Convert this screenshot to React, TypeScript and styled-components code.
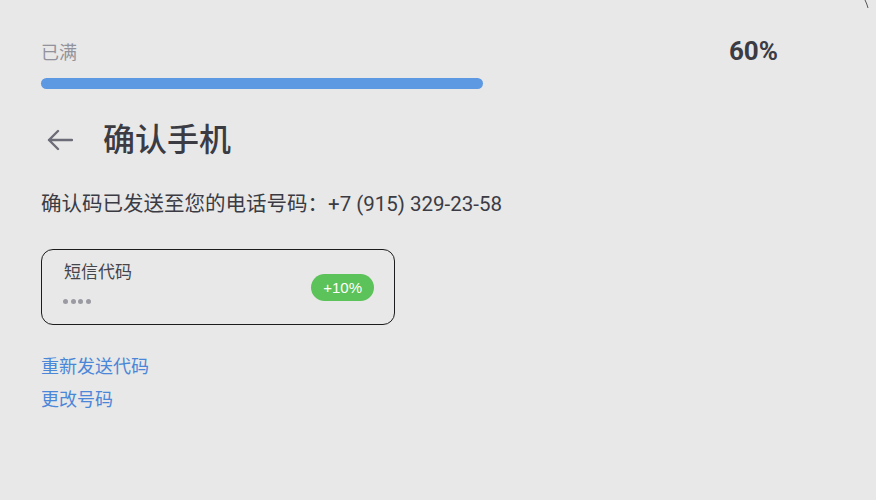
import React from "react";
import styled, { createGlobalStyle } from "styled-components";

const GlobalStyle = createGlobalStyle`
  html, body {
    margin: 0;
    padding: 0;
    background: #e8e8e8;
  }
  body {
    font-family: "Noto Sans", "Noto Sans CJK SC", sans-serif;
  }
`;

const Page = styled.div`
  position: relative;
  width: 876px;
  height: 500px;
  box-sizing: border-box;
  padding: 37px 0 0 41px;
  background: #e8e8e8;
  overflow: hidden;
`;

const ProgressBlock = styled.div`
  width: 737px;
  display: flex;
  flex-direction: column;
`;

const ProgressHead = styled.div`
  display: flex;
  justify-content: space-between;
  align-items: center;
  height: 28px;
`;

const Muted = styled.span`
  font-size: 18px;
  color: #92929c;
  font-family: "Noto Sans CJK SC", sans-serif;
`;

const Percent = styled.span`
  font-family: "Roboto", "Liberation Sans", sans-serif;
  font-size: 26px;
  font-weight: 700;
  color: #3b3b44;
`;

const Track = styled.div`
  margin-top: 13px;
  height: 11px;
  border-radius: 6px;
`;

const Fill = styled.div`
  height: 100%;
  border-radius: 6px;
  background: #5d98e2;
`;

const TitleRow = styled.div`
  display: flex;
  align-items: center;
  gap: 30px;
  margin-top: 26px;
  height: 44px;
`;

const BackButton = styled.button`
  border: none;
  background: none;
  padding: 0 0 0 6px;
  margin-top: 6px;
  display: flex;
  align-items: center;
  cursor: pointer;
`;

const Title = styled.h1`
  margin: 0;
  font-family: "Noto Sans CJK SC", sans-serif;
  font-size: 32px;
  font-weight: 500;
  color: #3b3b44;
`;

const Subtitle = styled.p`
  margin: 33px 0 0;
  font-size: 20.5px;
  color: #3b3b44;
  font-family: "Roboto", "Noto Sans CJK SC", sans-serif;
  line-height: 24px;
`;

const Field = styled.div`
  margin-top: 33px;
  width: 354px;
  height: 76px;
  box-sizing: border-box;
  border: 1.5px solid #1c1c1e;
  border-radius: 12px;
  padding: 10px 20px 0 22px;
  display: flex;
  justify-content: space-between;
  align-items: center;
`;

const FieldText = styled.div`
  display: flex;
  flex-direction: column;
  align-self: flex-start;
`;

const FieldLabel = styled.span`
  font-size: 17px;
  color: #45454c;
  font-family: "Noto Sans CJK SC", sans-serif;
  line-height: 22px;
`;

const Dots = styled.div`
  display: flex;
  gap: 2.5px;
  margin: 17px 0 0 -1px;
`;

const Dot = styled.span`
  width: 5px;
  height: 5px;
  border-radius: 50%;
  background: #9a9aa2;
`;

const Badge = styled.span`
  background: #5cc25a;
  color: #fff;
  font-family: "Liberation Sans", "Roboto", sans-serif;
  font-size: 15px;
  padding: 0 12px;
  height: 27px;
  line-height: 27px;
  border-radius: 14px;
  margin-bottom: 10px;
`;

const Links = styled.div`
  margin-top: 28px;
  display: flex;
  flex-direction: column;
  gap: 8px;
`;

const Link = styled.a`
  font-size: 18px;
  color: #4b87d8;
  font-family: "Noto Sans CJK SC", sans-serif;
  line-height: 25px;
  text-decoration: none;
  cursor: pointer;
`;

const Corner = styled.svg`
  position: absolute;
  top: 0;
  right: 0;
`;

export default function App() {
  const progress = 60;
  return (
    <>
      <GlobalStyle />
      <Page>
        <Corner width="14" height="12" viewBox="0 0 14 12">
          <path d="M3 0 Q5 4 6 8" stroke="#555" strokeWidth="1" fill="none" />
        </Corner>
        <ProgressBlock>
          <ProgressHead>
            <Muted>已满</Muted>
            <Percent>{progress}%</Percent>
          </ProgressHead>
          <Track>
            <Fill style={{ width: `${progress}%` }} />
          </Track>
        </ProgressBlock>

        <TitleRow>
          <BackButton aria-label="返回">
            <svg width="26" height="22" viewBox="0 0 26 22" fill="none">
              <path
                d="M25 11H2M11 2L2 11l9 9"
                stroke="#6c6c78"
                strokeWidth="2.4"
                strokeLinecap="round"
                strokeLinejoin="round"
              />
            </svg>
          </BackButton>
          <Title>确认手机</Title>
        </TitleRow>

        <Subtitle>确认码已发送至您的电话号码：+7 (915) 329-23-58</Subtitle>

        <Field>
          <FieldText>
            <FieldLabel>短信代码</FieldLabel>
            <Dots>
              {[0, 1, 2, 3].map((i) => (
                <Dot key={i} />
              ))}
            </Dots>
          </FieldText>
          <Badge>+10%</Badge>
        </Field>

        <Links>
          <Link>重新发送代码</Link>
          <Link>更改号码</Link>
        </Links>
      </Page>
    </>
  );
}
